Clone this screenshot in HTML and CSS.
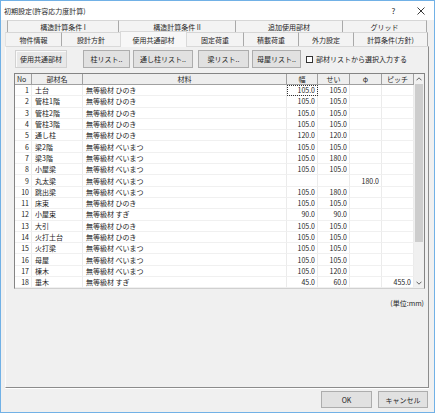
FILE: index.html
```html
<!DOCTYPE html>
<html lang="ja">
<head>
<meta charset="utf-8">
<title>初期設定</title>
<link rel="stylesheet" href="styles.css">
</head>
<body>
<div class="window">
  <div class="titlebar">
    <span class="title">初期設定(許容応力度計算)</span>
    <span class="ctl">?</span>
    <span class="ctl"><svg width="8" height="8" viewBox="0 0 8 8"><path d="M0.5 0.5L7.5 7.5M7.5 0.5L0.5 7.5" stroke="#222" stroke-width="0.9" fill="none"/></svg></span>
  </div>
  <div class="client">
    <div class="tabs">
      <div class="tabrow row1">
        <div class="tab t1a">構造計算条件 I</div>
        <div class="tab t1b">構造計算条件 II</div>
        <div class="tab t1c">追加使用部材</div>
        <div class="tab t1d">グリッド</div>
      </div>
      <div class="tabrow row2">
        <div class="tab t2a">物件情報</div>
        <div class="tab t2b">設計方針</div>
        <div class="tab t2c sel">使用共通部材</div>
        <div class="tab t2d">固定荷重</div>
        <div class="tab t2e">積載荷重</div>
        <div class="tab t2f">外力設定</div>
        <div class="tab t2g">計算条件(方針)</div>
      </div>
    </div>
    <div class="panel">
      <div class="toolbar">
        <button class="btn flat b-common">使用共通部材</button>
        <button class="btn b-col">柱リスト..</button>
        <button class="btn b-tcol">通し柱リスト..</button>
        <button class="btn b-beam">梁リスト..</button>
        <button class="btn b-roof">母屋リスト..</button>
        <label class="check"><span class="box"></span><span>部材リストから選択入力する</span></label>
      </div>
      <div class="grid">
        <div class="cells">
          <div class="hd left">No</div><div class="hd">部材名</div><div class="hd">材料</div><div class="hd">幅</div><div class="hd">せい</div><div class="hd">φ</div><div class="hd">ピッチ</div>

          <div class="c num">1</div><div class="c">土台</div><div class="c mat">無等級材 ひのき</div><div class="c num focus">105.0</div><div class="c num">105.0</div><div class="c num"></div><div class="c num"></div>
          <div class="c num">2</div><div class="c">管柱1階</div><div class="c mat">無等級材 ひのき</div><div class="c num">105.0</div><div class="c num">105.0</div><div class="c num"></div><div class="c num"></div>
          <div class="c num">3</div><div class="c">管柱2階</div><div class="c mat">無等級材 ひのき</div><div class="c num">105.0</div><div class="c num">105.0</div><div class="c num"></div><div class="c num"></div>
          <div class="c num">4</div><div class="c">管柱3階</div><div class="c mat">無等級材 ひのき</div><div class="c num">105.0</div><div class="c num">105.0</div><div class="c num"></div><div class="c num"></div>
          <div class="c num">5</div><div class="c">通し柱</div><div class="c mat">無等級材 ひのき</div><div class="c num">120.0</div><div class="c num">120.0</div><div class="c num"></div><div class="c num"></div>
          <div class="c num">6</div><div class="c">梁2階</div><div class="c mat">無等級材 べいまつ</div><div class="c num">105.0</div><div class="c num">105.0</div><div class="c num"></div><div class="c num"></div>
          <div class="c num">7</div><div class="c">梁3階</div><div class="c mat">無等級材 べいまつ</div><div class="c num">105.0</div><div class="c num">180.0</div><div class="c num"></div><div class="c num"></div>
          <div class="c num">8</div><div class="c">小屋梁</div><div class="c mat">無等級材 べいまつ</div><div class="c num">105.0</div><div class="c num">105.0</div><div class="c num"></div><div class="c num"></div>
          <div class="c num">9</div><div class="c">丸太梁</div><div class="c mat">無等級材 べいまつ</div><div class="c num"></div><div class="c num"></div><div class="c num">180.0</div><div class="c num"></div>
          <div class="c num">10</div><div class="c">跳出梁</div><div class="c mat">無等級材 べいまつ</div><div class="c num">105.0</div><div class="c num">180.0</div><div class="c num"></div><div class="c num"></div>
          <div class="c num">11</div><div class="c">床束</div><div class="c mat">無等級材 ひのき</div><div class="c num">105.0</div><div class="c num">105.0</div><div class="c num"></div><div class="c num"></div>
          <div class="c num">12</div><div class="c">小屋束</div><div class="c mat">無等級材 すぎ</div><div class="c num">90.0</div><div class="c num">90.0</div><div class="c num"></div><div class="c num"></div>
          <div class="c num">13</div><div class="c">大引</div><div class="c mat">無等級材 ひのき</div><div class="c num">105.0</div><div class="c num">105.0</div><div class="c num"></div><div class="c num"></div>
          <div class="c num">14</div><div class="c">火打土台</div><div class="c mat">無等級材 ひのき</div><div class="c num">105.0</div><div class="c num">105.0</div><div class="c num"></div><div class="c num"></div>
          <div class="c num">15</div><div class="c">火打梁</div><div class="c mat">無等級材 べいまつ</div><div class="c num">105.0</div><div class="c num">105.0</div><div class="c num"></div><div class="c num"></div>
          <div class="c num">16</div><div class="c">母屋</div><div class="c mat">無等級材 べいまつ</div><div class="c num">105.0</div><div class="c num">105.0</div><div class="c num"></div><div class="c num"></div>
          <div class="c num">17</div><div class="c">棟木</div><div class="c mat">無等級材 べいまつ</div><div class="c num">105.0</div><div class="c num">120.0</div><div class="c num"></div><div class="c num"></div>
          <div class="c num">18</div><div class="c">垂木</div><div class="c mat">無等級材 すぎ</div><div class="c num">45.0</div><div class="c num">60.0</div><div class="c num"></div><div class="c num">455.0</div>
        </div>
        <div class="scrollbar">
          <div class="sb-btn"><svg width="6" height="4" viewBox="0 0 6 4"><path d="M0.5 3.3L3 0.8L5.5 3.3" stroke="#606060" stroke-width="1" fill="none"/></svg></div>
          <div class="sb-thumb"></div>
          <div class="sb-track"></div>
          <div class="sb-btn"><svg width="6" height="4" viewBox="0 0 6 4"><path d="M0.5 0.7L3 3.2L5.5 0.7" stroke="#606060" stroke-width="1" fill="none"/></svg></div>
        </div>
      </div>
      <div class="unit">(単位:mm)</div>
    </div>
    <div class="footer">
      <button class="btn b-ok">OK</button>
      <button class="btn b-cancel">キャンセル</button>
    </div>
  </div>
</div>
</body>
</html>
```

FILE: styles.css
```css
* { box-sizing: border-box; }

body {
  margin: 0;
  font-family: "Noto Sans CJK JP", "Noto Sans", sans-serif;
  font-size: 7px;
  color: #1e1e1e;
}

.window {
  width: 435px;
  height: 413px;
  border: 1px solid #71b1e6;
  background: #f0f0f0;
  display: flex;
  flex-direction: column;
}

.titlebar {
  height: 19px;
  flex: none;
  background: #fff;
  display: flex;
  align-items: center;
  padding-left: 3px;
}

.title { flex: 1; line-height: 10px; }

.ctl {
  width: 27px;
  display: flex;
  justify-content: center;
  align-items: center;
  font-size: 8px;
  line-height: 10px;
}

.client {
  flex: 1;
  display: flex;
  flex-direction: column;
  padding: 0 5px 4px 4px;
}

.tabs { flex: none; }

.tabrow { display: flex; }

.row1 { height: 12px; margin-left: 2px; width: 420px; }

.row2 { height: 14px; align-items: flex-end; }

.tab {
  height: 100%;
  display: flex;
  align-items: center;
  justify-content: center;
  background: #f3f3f3;
  border-top: 1px solid #d6d6d6;
  border-left: 1px solid #a9a9a9;
  line-height: 10px;
  white-space: nowrap;
}

.tab:last-child { border-right: 1px solid #a9a9a9; }

.row2 .tab:first-child { border-left-color: #e2e2e2; }

.t1a { width: 111px; }
.t1b { width: 117px; }
.t1c { width: 107px; }
.t1d { width: 85px; }

.t2a { width: 56px; }
.t2b { width: 59px; }
.t2c { width: 67px; }
.t2d { width: 56px; }
.t2e { width: 55px; }
.t2f { width: 55px; }
.t2g { width: 75px; }

.tab.sel {
  height: 16px;
  background: #f7f7f7;
  border-left-color: #d9d9d9;
  border-right: 1px solid #d9d9d9;
  border-top-color: #d9d9d9;
  margin-bottom: -1px;
  position: relative;
  z-index: 1;
}

.tab.sel + .tab { border-left: none; }

.panel {
  flex: none;
  height: 342px;
  border: 1px solid;
  border-color: #d9d9d9 #8c8c8c #8c8c8c #fcfcfc;
  box-shadow: 0 1px 0 #fff;
  padding: 3px 3px 0 8px;
  display: flex;
  flex-direction: column;
}

.toolbar {
  height: 18px;
  display: flex;
  align-items: stretch;
  gap: 3px;
  padding-left: 1px;
}

.btn {
  font-family: inherit;
  font-size: 7px;
  color: #1e1e1e;
  background: #e1e1e1;
  border: 1px solid #adadad;
  padding: 0;
  margin: 0;
  line-height: 10px;
  white-space: nowrap;
}

.btn.flat {
  background: #e8e8e8;
  border-color: #d2d2d2;
  box-shadow: inset 1px 1px 0 #fafafa;
}

.b-common { width: 52px; margin-right: 13px; }
.b-col { width: 47px; }
.b-tcol { width: 60px; }
.b-beam { width: 51px; margin-left: 2px; }
.b-roof { width: 49px; }

.check {
  display: flex;
  align-items: center;
  gap: 3px;
  margin-left: 2px;
  line-height: 10px;
}

.box {
  width: 7px;
  height: 7px;
  background: #fff;
  border: 1px solid #333;
}

.grid {
  margin-top: 5px;
  width: 411px;
  height: 216px;
  border: 1px solid #848484;
  border-bottom-color: #d0d0d0;
  display: flex;
  background: #f0f0f0;
}

.cells {
  display: grid;
  grid-template-columns: 17px 51px 204px 31px 32px 32px 32px;
  grid-template-rows: 11px repeat(18, 11.3px);
  align-content: start;
}

.hd {
  background: #eeeeee;
  border-right: 1px solid #a0a0a0;
  border-bottom: 1px solid #a0a0a0;
  display: flex;
  align-items: center;
  justify-content: center;
  line-height: 10px;
  white-space: nowrap;
}

.hd.left { justify-content: flex-start; padding-left: 2px; }

.c {
  background: #fff;
  border-right: 1px solid #ebebeb;
  border-bottom: 1px solid #f0f0f0;
  display: flex;
  align-items: center;
  padding: 0 2px 0 3px;
  line-height: 10px;
  white-space: nowrap;
  overflow: hidden;
}

.c.mat { padding-left: 3px; }

.c.num { justify-content: flex-end; padding: 0 2px 0 0; }

.c.focus { outline: 1px dotted #333; outline-offset: -1px; }

.scrollbar {
  width: 10px;
  display: flex;
  flex-direction: column;
  background: #f0f0f0;
}

.sb-btn {
  height: 10px;
  display: flex;
  align-items: center;
  justify-content: center;
}

.sb-btn:last-child { height: 11px; }

.sb-thumb {
  height: 158px;
  margin: 0 1px;
  background: #cdcdcd;
}

.sb-track { flex: 1; }

.unit {
  margin-top: 9px;
  text-align: right;
  padding-right: 1px;
  line-height: 10px;
}

.footer {
  display: flex;
  justify-content: flex-end;
  gap: 6px;
  margin-top: 3px;
  padding-right: 1px;
}

.b-ok { width: 51px; height: 17px; }
.b-cancel { width: 50px; height: 17px; }
```
